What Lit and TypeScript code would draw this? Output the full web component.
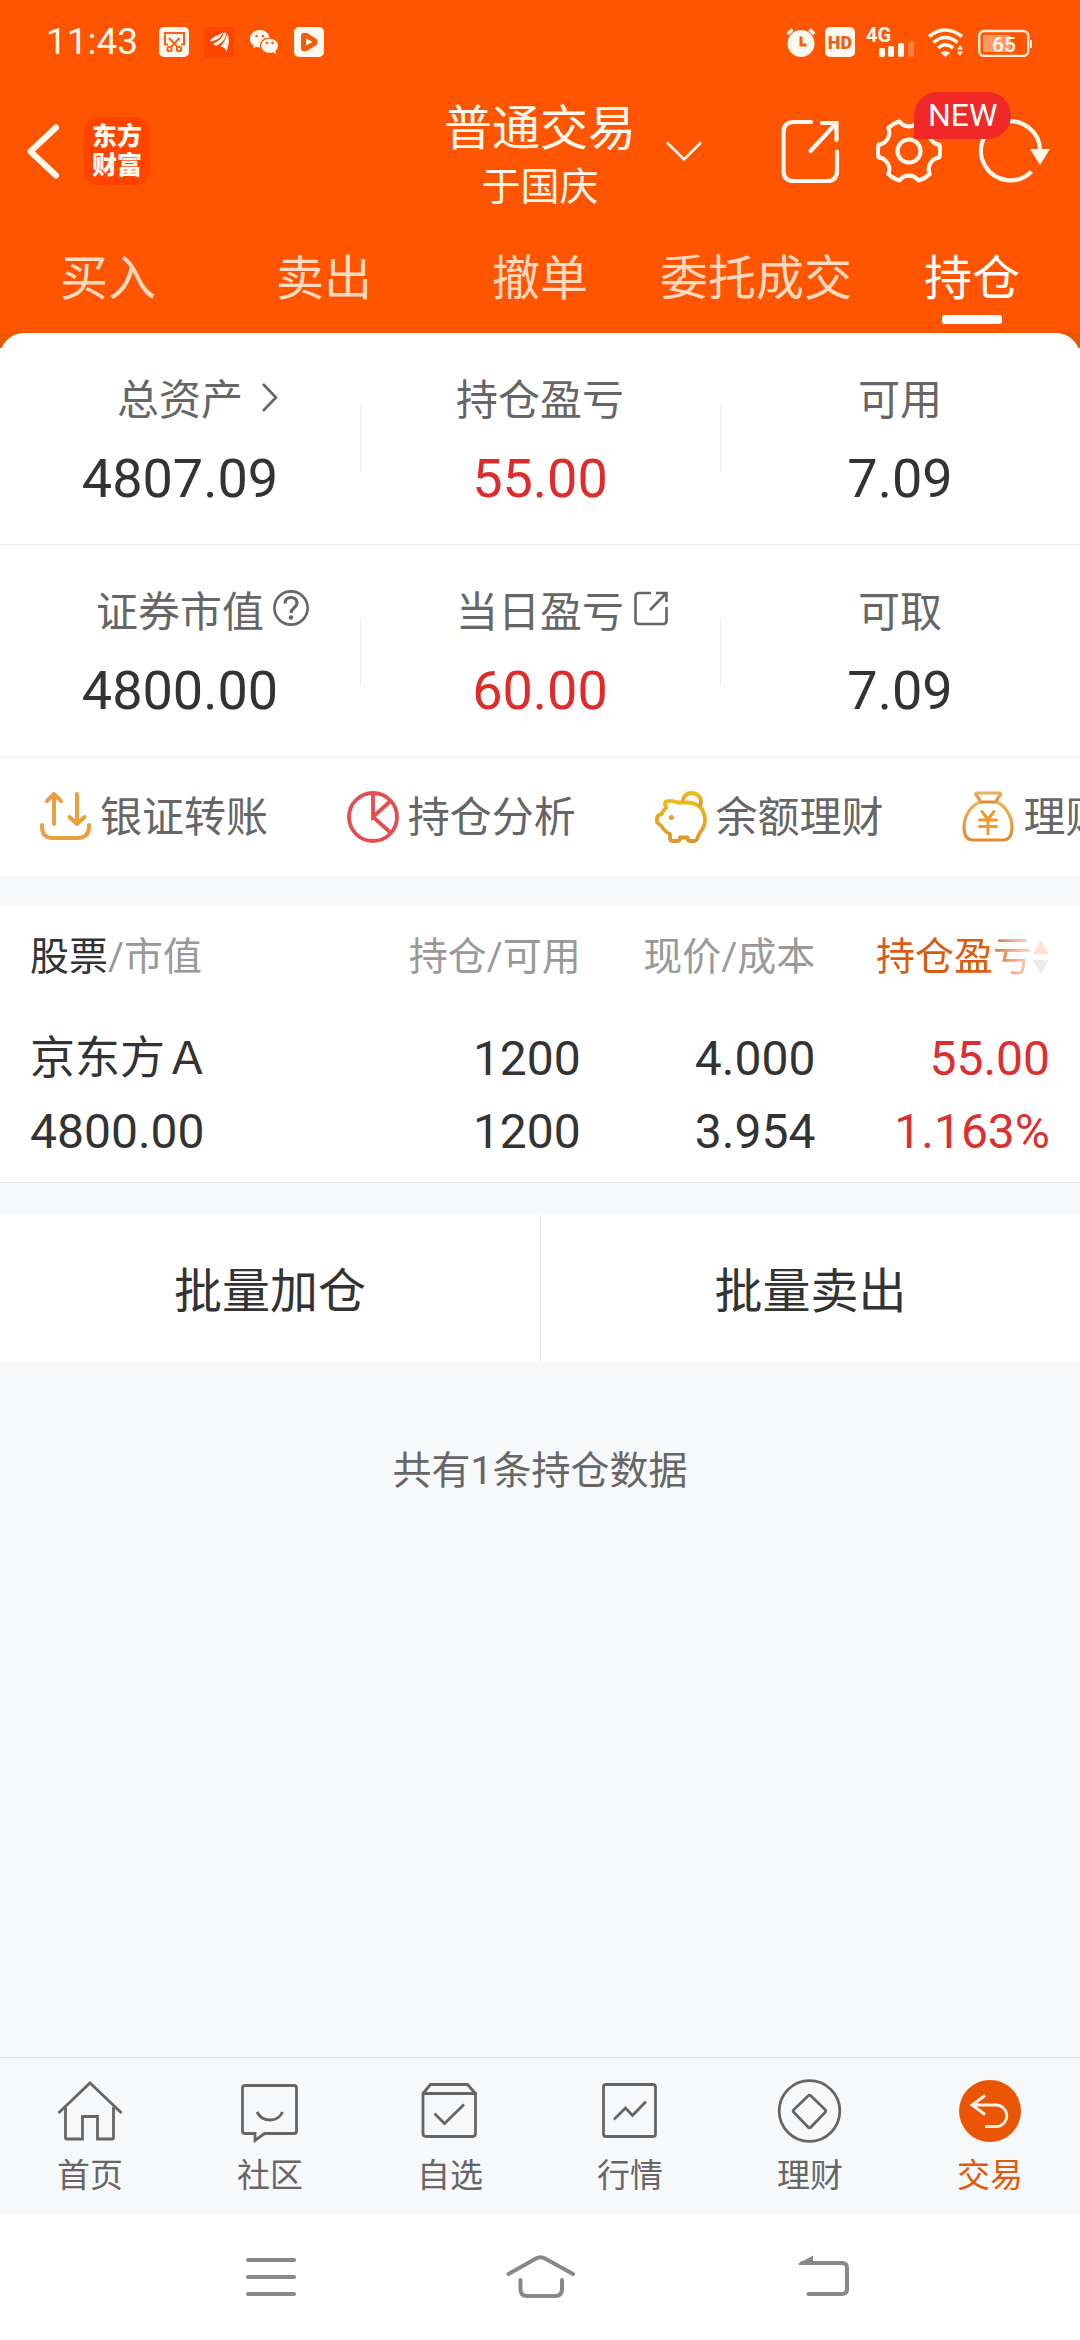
import { LitElement, html, svg, css, nothing, TemplateResult } from "lit";
import { customElement, state } from "lit/decorators.js";
import { classMap } from "lit/directives/class-map.js";

interface Metric {
  label: string;
  value: string;
  rising?: boolean;
  icon?: TemplateResult;
}

interface Holding {
  name: string;
  marketValue: string;
  volume: string;
  available: string;
  price: string;
  cost: string;
  profit: string;
  ratio: string;
}

/** Outline of a six-toothed cog centred on (cx, cy). */
function cogPath(cx: number, cy: number, r: number): string {
  const point = (deg: number) => {
    const a = (deg * Math.PI) / 180;
    return `${(cx + r * Math.cos(a)).toFixed(1)} ${(cy + r * Math.sin(a)).toFixed(1)}`;
  };
  let d = `M${point(-12)}`;
  for (let k = 0; k < 6; k++) {
    d += `Q${(cx + (r + 1) * Math.cos((k * Math.PI) / 3)).toFixed(1)} ${(cy + (r + 1) * Math.sin((k * Math.PI) / 3)).toFixed(1)} ${point(k * 60 + 12)}`;
    d += `A12 12 0 0 0 ${point(k * 60 + 48)}`;
  }
  return d + "Z";
}

const chevronRight = html`<svg class="hint" width="36" height="42" viewBox="0 0 36 42" aria-hidden="true">
  <path d="M11 6l13 13.5L11 33" fill="none" stroke="currentColor" stroke-width="2.6" /></svg>`;

const helpMark = html`<svg class="hint" width="36" height="42" viewBox="0 0 36 42" aria-hidden="true">
  <g fill="none" stroke="currentColor" stroke-width="2.6">
    <circle cx="18" cy="18" r="16.6" />
    <path d="M12 13.5c0-4 2.600-6 6-6s6 2.200 6 5.400c0 4.600-6 5-6 10" stroke-width="3.200" />
  </g>
  <circle cx="18" cy="27.500" r="2.200" fill="currentColor" /></svg>`;

const openMark = html`<svg class="hint" width="36" height="42" viewBox="0 0 36 42" aria-hidden="true">
  <g fill="none" stroke="currentColor" stroke-width="2.600">
    <path d="M18 3H6Q2.500 3 2.500 6.500V30Q2.500 34 6 34H30Q33.500 34 33.500 30.500V17" />
    <path d="M23 3H33.500V12M33 3.500L17 20" />
  </g></svg>`;

const summary: Metric[][] = [
  [
    { label: "总资产", value: "4807.09", icon: chevronRight },
    { label: "持仓盈亏", value: "55.00", rising: true },
    { label: "可用", value: "7.09" },
  ],
  [
    { label: "证券市值", value: "4800.00", icon: helpMark },
    { label: "当日盈亏", value: "60.00", rising: true, icon: openMark },
    { label: "可取", value: "7.09" },
  ],
];

const holdings: Holding[] = [
  {
    name: "京东方Ａ",
    marketValue: "4800.00",
    volume: "1200",
    available: "1200",
    price: "4.000",
    cost: "3.954",
    profit: "55.00",
    ratio: "1.163%",
  },
];

const shortcuts = [
  {
    label: "银证转账",
    art: svg`<g fill="none" stroke="#e8a040" stroke-width="4" stroke-linecap="round" stroke-linejoin="round">
      <path d="M15 33V3M8 10l7-7 7 7M38 3v30M30.500 26l7.500 7 7.500-7" />
      <path d="M3 34v1.500Q3 47 14 47H38Q50 47 50 35.500V34" /></g>`,
  },
  {
    label: "持仓分析",
    art: svg`<g fill="none" stroke="#e84c4f" stroke-width="3.800">
      <circle cx="26" cy="26" r="24" /><path d="M26 2V26L43.500 10M26 26L43.500 41.500" /></g>`,
  },
  {
    label: "余额理财",
    art: svg`<defs><linearGradient id="pig" x1="0" y1="0" x2="0" y2="1">
      <stop offset="0" stop-color="#f0b818" /><stop offset="1" stop-color="#e0952a" /></linearGradient></defs>
      <g fill="none" stroke="url(#pig)" stroke-width="3.800" stroke-linejoin="round">
      <path d="M11 10.500Q8.500 12 11.500 16.500Q8 19 7 22.500L4 24Q2 24.500 2 27V30Q2 32 4 33Q7 35 8.500 38Q11 41.500 15 43V47Q15 50 18 50H22.500Q25 50 25 46.500H32.500Q32.500 50 35 50H39Q41 50 42 48L44.500 42Q50 36 50 28.500Q49 12 32 11.500H23Q16 9 11 10.500Z" />
      <path d="M27.500 10C29 4 32.500 2 36.500 2C42 2 46 6 46 10.500Q46 13 44.500 15" /></g>
      <circle cx="16.500" cy="26.500" r="2.600" fill="#eaa424" />`,
  },
  {
    label: "理财产品",
    art: svg`<defs><linearGradient id="bag" x1="0" y1="0" x2="0" y2="1">
      <stop offset="0" stop-color="#ecb258" /><stop offset="1" stop-color="#e08a34" /></linearGradient></defs>
      <g fill="none" stroke="url(#bag)" stroke-width="3.200" stroke-linejoin="round">
      <path d="M15 2H37.500Q39.500 2 38.500 4Q35 7 34.500 11H18Q17.500 7 14 4Q13 2 15 2Z" />
      <path d="M18 11C8 15 2 26 2 36C2 44 5 49 11 49H41C47 49 50 44 50 36C50 26 44 15 34.500 11" /></g>
      <path d="M20 20.500l6 8 6-8M17.500 29H34.500M17.500 35.500H34.500M26 28.500V43" fill="none" stroke="#ee9a2c" stroke-width="3" stroke-linecap="round" />`,
  },
];

const sections = [
  {
    label: "首页",
    art: svg`<path d="M1.500 35L33 5L64.500 35M8.500 29V59.500Q8.500 61 10 61H25.500V38.500H40.500V61H55Q56.500 61 56.500 59.500V29" />`,
  },
  {
    label: "社区",
    art: svg`<path d="M8 7.500H57Q59.500 7.500 59.500 10V53Q59.500 55.500 57 55.500H27.500L18 62.500V55.500H8Q5.500 55.500 5.500 53V10Q5.500 7.500 8 7.500Z" />
      <path d="M20 34Q24 42 33 42T45.500 34" />`,
  },
  {
    label: "自选",
    art: svg`<path d="M6 15.500L13.500 6.500H50.500L58.500 15.500M6 15.500H58.500V55.500Q58.500 58.500 55.500 58.500H9Q6 58.500 6 55.500Z" />
      <path d="M17.500 35.500L27.500 45.500L47 26.500" />`,
  },
  {
    label: "行情",
    art: svg`<rect x="6.500" y="6.500" width="52" height="52" rx="2.500" />
      <path d="M17 41.500L28.500 30L35.500 37.500L49 23.500" />`,
  },
  {
    label: "理财",
    art: svg`<circle cx="32.500" cy="33" r="30.300" />
      <path d="M31 18Q32.500 16.500 34 18L48 31.500Q49.500 33 48 34.500L34 49Q32.500 50.500 31 49L17 34.500Q15.500 33 17 31.500Z" />`,
  },
  {
    label: "交易",
    art: svg`<circle cx="33" cy="33" r="31" fill="#ea5504" stroke="none" />
      <path d="M28 17.500L15 27L28 36.500M15 27H39A10.800 10.800 0 0 1 39 48.600H28" stroke="#fff3e6" />`,
  },
];

@customElement("status-bar")
export class StatusBar extends LitElement {
  static styles = css`
    :host {
      display: flex;
      justify-content: space-between;
      align-items: center;
      height: 84px;
      padding: 0 48px 0 46px;
      color: #fff8ee;
    }
    .group {
      display: flex;
      align-items: center;
    }
    .alerts {
      gap: 15px;
    }
    .radios {
      gap: 9px;
    }
    .clock {
      margin-right: 6px;
      font-size: 37px;
      line-height: 44px;
    }
    svg {
      display: block;
      font-family: Roboto, sans-serif;
    }
  `;

  render() {
    return html`
      <div class="group alerts">
        <time class="clock">11:43</time>
        <svg width="30" height="30" viewBox="0 0 30 30" aria-hidden="true">
          <rect width="30" height="30" rx="5" fill="#fff8ee" />
          <g fill="none" stroke="#f0641e" stroke-width="2">
            <path d="M9 17.500H6V6H25V17.500H22" />
            <path d="M10 11l8.500 9M20.500 11L12 20" />
            <circle cx="10.500" cy="22" r="2.200" /><circle cx="20" cy="22" r="2.200" />
          </g>
        </svg>
        <svg width="30" height="30" viewBox="0 0 30 30" aria-hidden="true">
          <rect width="30" height="30" rx="2" fill="#ff4400" />
          <path fill="#fff8ee" d="M6 14Q8 10 12 9Q16 7.500 19 5Q18 12 7 14.500ZM9 17Q19 12 19.500 6L22 5.500Q22.500 14 12 19ZM16.500 19.500Q22.500 13 23 6Q27 12 22.500 25Q21.500 20 16.500 19.500Z" />
        </svg>
        <svg width="30" height="30" viewBox="0 0 30 30" aria-hidden="true">
          <path fill="#fff8ee" d="M11 3C16 3 20 6.500 20.500 10.500C15 10.500 11 14 11 18.500L11.300 20.500Q9 20.500 7 19.800L4 21.500L4.800 18.500Q1 16 1 11.500C1 6.500 5.500 3 11 3Z" />
          <path fill="#fff8ee" d="M20.500 11.700C25 11.700 29 14.500 29 18.700Q29 22 26.200 24L27 27L24 25.300Q22.500 25.800 20.500 25.800C16 25.800 12.300 22.700 12.300 18.700S16 11.700 20.500 11.700Z" />
          <g fill="#ff5500"><circle cx="7.500" cy="9" r="1.300" /><circle cx="13.800" cy="9" r="1.300" /><circle cx="18" cy="16" r="1.200" /><circle cx="23.500" cy="16" r="1.200" /></g>
        </svg>
        <svg width="30" height="30" viewBox="0 0 30 30" aria-hidden="true">
          <rect width="30" height="30" rx="5" fill="#fff8ee" />
          <path fill="#f25a0c" d="M7 9Q7 5.500 10.500 6L13 6L22.500 12Q25 15 22.500 18L13 24Q7 25.500 7 21Z" />
          <path fill="#fff8ee" d="M12 11.500L18.500 15L12 18.500Z" />
        </svg>
      </div>
      <div class="group radios">
        <svg width="30" height="30" viewBox="0 0 30 30" aria-hidden="true">
          <circle cx="15" cy="16.500" r="13.500" fill="#fff8ee" />
          <path d="M15 9.500V18H20.500" fill="none" stroke="#f2600f" stroke-width="3" />
          <path d="M1.500 7L6.500 2.500M28.500 7L23.500 2.500" stroke="#fff8ee" stroke-width="3.400" />
        </svg>
        <svg width="30" height="30" viewBox="0 0 30 30" role="img" aria-label="HD">
          <rect width="30" height="30" rx="5" fill="#fff8ee" />
          <text x="15" y="22" text-anchor="middle" font-size="18" font-weight="900" fill="#e8601c">HD</text>
        </svg>
        <svg width="54" height="38" viewBox="0 -4 54 38" role="img" aria-label="4G">
          <text x="2" y="15" font-size="20" font-weight="700" fill="#fff8ee">4G</text>
          <g fill="#fff8ee">
            <rect x="15" y="21" width="6" height="9" rx="2" /><rect x="24" y="19" width="6" height="11" rx="2" />
            <rect x="34" y="16" width="6" height="14" rx="2" /><rect x="44" y="14" width="6" height="16" rx="2" opacity="0.250" />
          </g>
        </svg>
        <svg width="42" height="30" viewBox="0 0 42 30" aria-hidden="true">
          <g fill="none" stroke="#fff8ee" stroke-width="3.600">
            <path d="M2 9.500Q18 -3.500 35 9.500M6.500 15.500Q18 5.500 30.500 15.500M11 21Q18 14.500 26 21" />
          </g>
          <path d="M13.500 26Q18.500 22 23 26L18.500 30Z" fill="#fff8ee" />
          <path d="M30 22.500L33 18L36 22.500ZM30 24.500H36L33 29Z" fill="#fff8ee" />
        </svg>
        <svg width="54" height="30" viewBox="0 0 54 30" role="img" aria-label="65">
          <rect x="1.200" y="4" width="49" height="25" rx="5" fill="none" stroke="#fff0dc" stroke-width="2.400" />
          <rect x="5" y="8" width="28" height="17" rx="2" fill="#fff" opacity="0.400" />
          <path d="M53 13V21" stroke="#fff0dc" stroke-width="2" />
          <text x="26" y="24.500" text-anchor="middle" font-size="21" font-weight="500" fill="#fff8ee">65</text>
        </svg>
      </div>
    `;
  }
}

@customElement("account-summary")
export class AccountSummary extends LitElement {
  static styles = css`
    :host {
      display: block;
      background: linear-gradient(#e85800 15px, #fff 15px);
    }
    .card {
      background: #fff;
      border-radius: 24px 24px 0 0;
    }
    .line {
      display: grid;
      grid-template-columns: repeat(3, 1fr);
      margin: 0;
      border-bottom: 1px solid #ececee;
    }
    .metric {
      display: flex;
      flex-direction: column;
      gap: 18px;
      padding: 40px 0 33px;
    }
    .metric + .metric {
      background: linear-gradient(#ebebee, #ebebee) 0 73px / 1px 66px no-repeat;
    }
    .label {
      display: grid;
      grid-template-columns: 1fr auto 1fr;
      align-items: center;
      color: #666;
      font-size: 42px;
      line-height: 56px;
    }
    .label-text {
      grid-column: 2;
    }
    .hint {
      display: block;
      margin: 0 0 4px 9px;
    }
    .value {
      margin: 0;
      color: #333;
      font-size: 54px;
      line-height: 64px;
      text-align: center;
    }
    .rising {
      color: #e02b2b;
    }
  `;

  render() {
    return html`<div class="card">
      ${summary.map(
        (line) => html`<dl class="line">
          ${line.map(
            (m) => html`<div class="metric">
              <dt class="label"><span class="label-text">${m.label}</span>${m.icon ?? nothing}</dt>
              <dd class=${classMap({ value: true, rising: !!m.rising })}>${m.value}</dd>
            </div>`,
          )}
        </dl>`,
      )}
    </div>`;
  }
}

@customElement("holdings-table")
export class HoldingsTable extends LitElement {
  static styles = css`
    :host {
      display: block;
      padding: 0 30px;
      background: #fff;
      border-bottom: 1px solid #e8e9ec;
    }
    table {
      width: 100%;
      border-collapse: collapse;
      table-layout: fixed;
      color: #333;
      text-align: right;
    }
    .wide {
      width: 31%;
    }
    .mid {
      width: 23%;
    }
    th,
    td {
      padding: 0;
      font-weight: 400;
    }
    th {
      height: 116px;
      box-sizing: border-box;
      padding: 26px 0 40px;
      color: #999;
      font-size: 39px;
      line-height: 50px;
      white-space: nowrap;
    }
    td {
      padding-bottom: 14px;
      font-size: 48px;
      line-height: 73px;
    }
    .first {
      text-align: left;
    }
    .strong {
      color: #333;
    }
    .name {
      font-size: 45px;
    }
    .rising {
      color: #dc2f2f;
    }
    .cell-line {
      display: block;
    }
    .sort {
      display: inline-flex;
      align-items: center;
      padding: 0;
      border: 0;
      background: none;
      color: #dc5a10;
      font: inherit;
      -webkit-mask-image: linear-gradient(to right, #000 62%, rgba(0, 0, 0, 0.2) 90%, rgba(0, 0, 0, 0.15));
      mask-image: linear-gradient(to right, #000 62%, rgba(0, 0, 0, 0.2) 90%, rgba(0, 0, 0, 0.15));
    }
    .arrows {
      display: block;
    }
  `;

  render() {
    return html`<table>
      <colgroup>
        <col class="wide" />
        <col class="mid" />
        <col class="mid" />
        <col class="mid" />
      </colgroup>
      <thead>
        <tr>
          <th class="first" scope="col"><span class="strong">股票</span>/市值</th>
          <th scope="col">持仓/可用</th>
          <th scope="col">现价/成本</th>
          <th scope="col">
            <button class="sort" type="button">持仓盈亏<svg class="arrows" width="18" height="36" viewBox="0 0 18 36" aria-hidden="true">
              <path d="M1 15L9 1L17 15Z" fill="#ff5500" /><path d="M1 21H17L9 35Z" fill="#888" />
            </svg></button>
          </th>
        </tr>
      </thead>
      <tbody>
        ${holdings.map(
          (h) => html`<tr>
            <td class="first"><span class="cell-line name">${h.name}</span><span class="cell-line">${h.marketValue}</span></td>
            <td><span class="cell-line">${h.volume}</span><span class="cell-line">${h.available}</span></td>
            <td><span class="cell-line">${h.price}</span><span class="cell-line">${h.cost}</span></td>
            <td class="rising"><span class="cell-line">${h.profit}</span><span class="cell-line">${h.ratio}</span></td>
          </tr>`,
        )}
      </tbody>
    </table>`;
  }
}

@customElement("app-root")
export class AppRoot extends LitElement {
  @state() private tab = "持仓";
  @state() private section = "交易";

  static styles = css`
    :host {
      display: flex;
      flex-direction: column;
      min-height: 100vh;
      background: #f7f8fa;
      font-family: Roboto, "Noto Sans CJK SC", sans-serif;
    }
    button {
      padding: 0;
      border: 0;
      background: none;
      color: inherit;
      font: inherit;
      cursor: pointer;
    }
    svg {
      display: block;
      flex: none;
    }
    .top {
      background: #ff5500;
      color: #fff8ee;
    }
    .title-bar {
      display: grid;
      grid-template-columns: 1fr auto 1fr;
      align-items: center;
      padding: 3px 30px 0;
      min-height: 128px;
    }
    .leading {
      display: flex;
      align-items: center;
      gap: 24px;
    }
    .brand {
      display: grid;
      place-content: center;
      width: 66px;
      height: 68px;
      border-radius: 14px;
      background: #ff4400;
      font-size: 25px;
      font-weight: 900;
      line-height: 29px;
    }
    .account {
      padding-top: 12px;
      text-align: center;
    }
    .account-title {
      margin: 0;
      font-size: 48px;
      font-weight: 400;
      line-height: 60px;
    }
    .account-owner {
      margin: 0;
      font-size: 39px;
      line-height: 56px;
    }
    .trailing {
      display: flex;
      align-items: center;
      justify-content: space-between;
      padding-left: 30px;
    }
    .actions {
      display: flex;
      gap: 36px;
    }
    .settings {
      position: relative;
    }
    .badge {
      position: absolute;
      z-index: 1;
      left: 38px;
      top: -26px;
      padding: 0 14px;
      border-radius: 24px 24px 24px 0;
      background: #f02828;
      color: #fff;
      font-size: 32px;
      line-height: 47px;
    }
    .tabs {
      display: grid;
      grid-template-columns: repeat(5, 1fr);
    }
    .tab {
      display: flex;
      flex-direction: column;
      align-items: center;
      gap: 8px;
      padding: 36px 0 9px;
      color: #ffd9c0;
      font-size: 48px;
      line-height: 56px;
      white-space: nowrap;
    }
    .tab::after {
      content: "";
      width: 60px;
      height: 9px;
      border-radius: 3px;
    }
    .tab.active {
      color: #fff;
    }
    .tab.active::after {
      background: #fff;
    }
    .shortcuts {
      display: flex;
      overflow: hidden;
      margin-bottom: 30px;
      background: #fff;
    }
    .shortcut {
      display: flex;
      flex: 0 0 28.5%;
      align-items: center;
      gap: 9px;
      height: 119px;
      padding-left: 39px;
      color: #666;
      font-size: 42px;
      line-height: 56px;
      white-space: nowrap;
    }
    .shortcut-label {
      padding-top: 3px;
    }
    .batch {
      display: grid;
      grid-template-columns: 1fr 1fr;
      margin-top: 30px;
      background: #fff;
    }
    .batch-action {
      height: 150px;
      padding-bottom: 3px;
      color: #333;
      font-size: 48px;
    }
    .batch-action + .batch-action {
      border-left: 1px solid #ebebee;
    }
    .count {
      flex: 1;
      margin: 0;
      padding-top: 80px;
      color: #666;
      font-size: 39px;
      line-height: 56px;
      text-align: center;
    }
    .sections {
      display: grid;
      grid-template-columns: repeat(6, 1fr);
      border-top: 1px solid #e0e1e4;
      background: #f7f8fa;
    }
    .section {
      display: flex;
      flex-direction: column;
      align-items: center;
      gap: 10px;
      padding: 20px 0 16px;
      color: #666;
      font-size: 33px;
      line-height: 44px;
    }
    .section.active {
      color: #e05a10;
    }
    .system {
      display: grid;
      grid-template-columns: repeat(3, 1fr);
      padding: 0 12.5%;
      background: #fff;
      color: #888;
    }
    .system-key {
      display: grid;
      place-items: center;
      height: 126px;
    }
  `;

  render() {
    return html`
      <header class="top">
        <status-bar></status-bar>
        <div class="title-bar">
          <div class="leading">
            <button type="button" aria-label="返回">
              <svg width="30" height="66" viewBox="6 0 30 66" overflow="visible">
                <path d="M32 9.500L6.500 33.500L32 57.500" fill="none" stroke="#fff8ee" stroke-width="6" stroke-linecap="round" stroke-linejoin="round" />
              </svg>
            </button>
            <div class="brand"><span>东方</span><span>财富</span></div>
          </div>
          <div class="account">
            <h1 class="account-title">普通交易</h1>
            <p class="account-owner">于国庆</p>
          </div>
          <div class="trailing">
            <button type="button" aria-label="切换账户">
              <svg width="36" height="21" viewBox="0 0 36 21">
                <path d="M1 1.500L18 18.500L35 1.500" fill="none" stroke="#fff8ee" stroke-width="2.600" />
              </svg>
            </button>
            <div class="actions">
              <button type="button" aria-label="分享">
                <svg width="60" height="66" viewBox="0 0 60 66">
                  <g fill="none" stroke="#fff8ee" stroke-width="4.200" stroke-linecap="round">
                    <path d="M31 4H14Q3.500 4 3.500 14V53Q3.500 63 14 63H47Q57 63 57 53V33.500" />
                    <path d="M42 5H56.500V22M56 5.500L30.500 33" />
                  </g>
                </svg>
              </button>
              <button class="settings" type="button" aria-label="设置">
                <svg width="66" height="66" viewBox="0 0 66 66">
                  <g fill="none" stroke="#fff8ee" stroke-width="4.200" stroke-linejoin="round">
                    <path d=${cogPath(33, 33, 31)} />
                    <circle cx="33" cy="33" r="11.500" />
                  </g>
                </svg>
                <span class="badge">NEW</span>
              </button>
              <button type="button" aria-label="刷新">
                <svg width="72" height="66" viewBox="0 0 72 66">
                  <path d="M53.500 53.500A29.500 29.500 0 1 1 62 33" fill="none" stroke="#fff8ee" stroke-width="4.200" />
                  <path d="M52 31H72L62 47Z" fill="#fff8ee" />
                </svg>
              </button>
            </div>
          </div>
        </div>
        <nav class="tabs">
          ${["买入", "卖出", "撤单", "委托成交", "持仓"].map(
            (name) => html`<button
              type="button"
              class=${classMap({ tab: true, active: name === this.tab })}
              @click=${() => (this.tab = name)}
            >${name}</button>`,
          )}
        </nav>
      </header>

      <account-summary></account-summary>

      <nav class="shortcuts">
        ${shortcuts.map(
          (s) => html`<button type="button" class="shortcut">
            <svg width="52" height="52" viewBox="0 0 52 52" aria-hidden="true">${s.art}</svg><span class="shortcut-label">${s.label}</span>
          </button>`,
        )}
      </nav>

      <holdings-table></holdings-table>

      <div class="batch">
        <button type="button" class="batch-action">批量加仓</button>
        <button type="button" class="batch-action">批量卖出</button>
      </div>
      <p class="count">共有1条持仓数据</p>

      <nav class="sections">
        ${sections.map(
          (s) => html`<button
            type="button"
            class=${classMap({ section: true, active: s.label === this.section })}
            @click=${() => (this.section = s.label)}
          >
            <svg width="66" height="66" viewBox="0 0 66 66" fill="none" stroke="#666" stroke-width="2.800" aria-hidden="true">${s.art}</svg>
            <span>${s.label}</span>
          </button>`,
        )}
      </nav>

      <div class="system">
        <button type="button" class="system-key" aria-label="菜单">
          <svg width="72" height="48" viewBox="0 0 72 48">
            <path d="M14 7H60M14 24H60M14 41H60" stroke="currentColor" stroke-width="4" stroke-linecap="round" />
          </svg>
        </button>
        <button type="button" class="system-key" aria-label="主页">
          <svg width="72" height="48" viewBox="0 0 72 48">
            <g fill="none" stroke="currentColor" stroke-width="4" stroke-linecap="round">
              <path d="M4.500 21L32 5.500Q36.500 3 41 5.500L69 21" />
              <path d="M16.500 27V36Q16.500 43 23 43H51Q58 43 58 36V27" />
            </g>
          </svg>
        </button>
        <button type="button" class="system-key" aria-label="后退">
          <svg width="100" height="48" viewBox="0 0 100 48">
            <path d="M42 10H82Q87 10 87 15V36Q87 41 82 41H48.500" fill="none" stroke="currentColor" stroke-width="4" stroke-linecap="round" />
            <path d="M38.500 10.500L53 2.500V12H39Z" fill="currentColor" />
          </svg>
        </button>
      </div>
    `;
  }
}
